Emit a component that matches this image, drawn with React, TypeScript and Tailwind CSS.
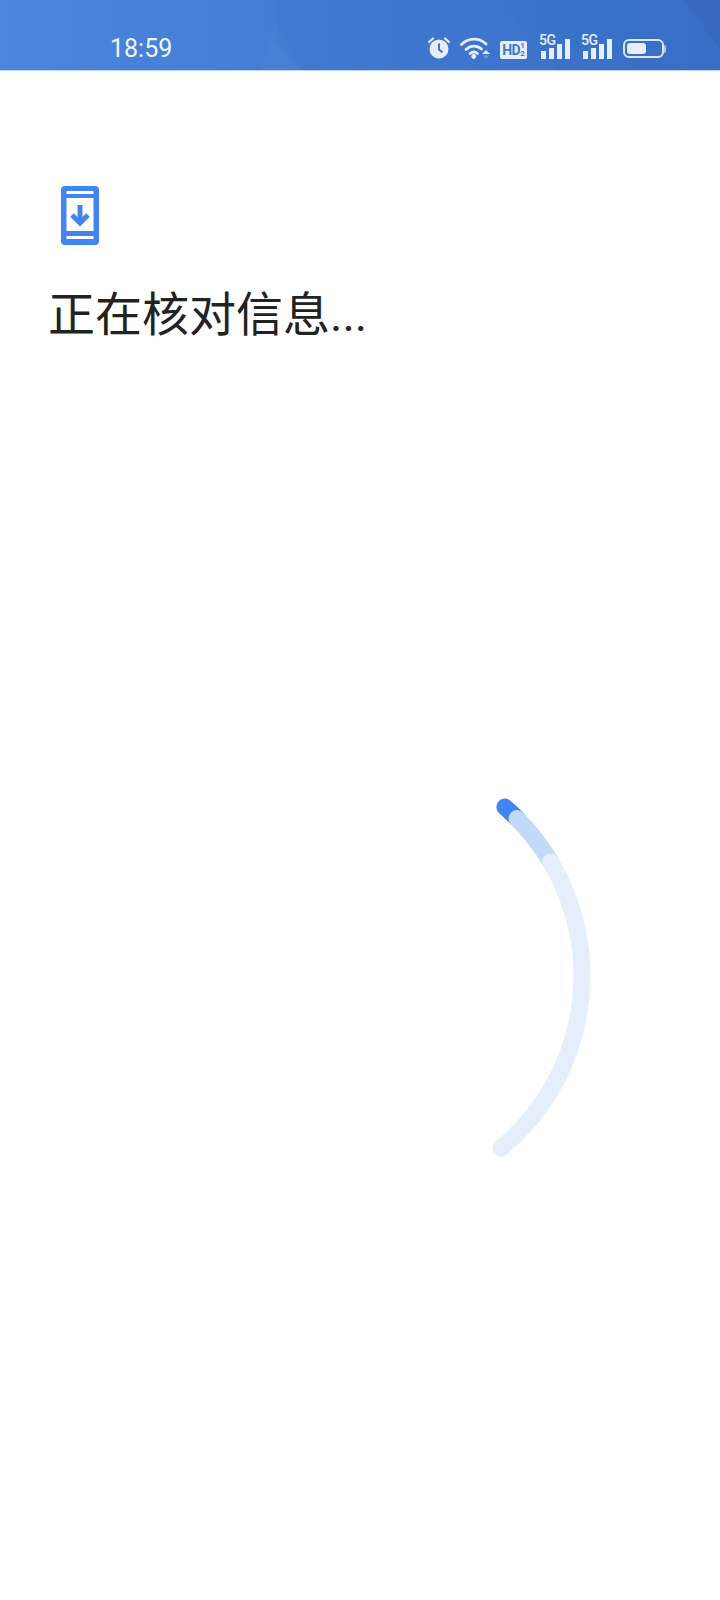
function AlarmIcon() {
  return (
    <svg width="24" height="23" viewBox="0 0 24 23" className="shrink-0">
      <circle cx="12" cy="13" r="9.5" fill="#e6eefb" />
      <path d="M12 7.5V13.5L15.5 16.5" stroke="#3f78cf" strokeWidth="2" fill="none" />
      <path d="M2 6L6 2.5M22 6L18 2.5" stroke="#e6eefb" strokeWidth="2.2" strokeLinecap="round" fill="none" />
    </svg>
  );
}

function WifiIcon() {
  return (
    <svg width="30" height="22" viewBox="0 0 30 22" className="shrink-0">
      <g stroke="#e6eefb" strokeWidth="2.8" fill="none" strokeLinecap="round">
        <path d="M1.5 7.5C8.5 0.5 19 0.5 26 7" />
        <path d="M6 12.5C10.5 8 17 8 21.5 12" />
        <path d="M10 16.5C12.5 14.5 15 14.5 17.5 16.5" />
      </g>
      <circle cx="13.7" cy="19.5" r="2.4" fill="#e6eefb" />
      <path d="M26 13L30 17H22Z" fill="#e6eefb" />
      <path d="M22.5 18.5H29.5L26 22Z" fill="#6f98da" />
    </svg>
  );
}

function SignalIcon() {
  return (
    <div className="relative w-[32px] h-[24px] shrink-0">
      <span className="absolute left-0 top-[-3px] text-[14px] leading-[16px] font-medium text-[#e6eefb] font-['Roboto',sans-serif] tracking-[-0.5px]">
        5G
      </span>
      <div className="absolute left-[2px] bottom-0 flex items-end gap-[3px]">
        <div className="w-[5px] h-[8px] bg-[#e6eefb]" />
        <div className="w-[5px] h-[11px] bg-[#e6eefb]" />
        <div className="w-[5px] h-[15px] bg-[#e6eefb]" />
        <div className="w-[5px] h-[20px] bg-[#e6eefb]" />
      </div>
    </div>
  );
}

function StatusBar() {
  return (
    <div className="relative h-[71px] overflow-hidden bg-gradient-to-r from-[#4a84dd] to-[#3a72ca] border-b border-[#bcd3f1]">
      {/* Faceted background */}
      <svg width="720" height="71" viewBox="0 0 720 71" className="absolute left-0 top-0">
        <path d="M0 0H110L122 71H0Z" fill="#ffffff" opacity="0.015" />
        <path d="M276 0H720V71H302L276 42Z" fill="#1f4f9e" opacity="0.05" />
        <path d="M260 71L276 20L303 71Z" fill="#ffffff" opacity="0.02" />
        <path d="M500 0L560 71H720V0Z" fill="#1f4f9e" opacity="0.03" />
        <path d="M684 0L720 50V0Z" fill="#1f4f9e" opacity="0.1" />
      </svg>
      <div className="relative flex items-end h-[59px] pl-[110px] pr-[54px]">
        <span className="text-[25px] leading-[25px] mb-[-2px] text-[#f2f6fd] font-['Roboto',sans-serif]">18:59</span>
        <div className="ml-auto flex items-end">
          <AlarmIcon />
          <div className="w-[9px]" />
          <WifiIcon />
          <div className="w-[10px]" />
          <div className="w-[27px] h-[18px] bg-[#e6eefb] rounded-[2px] flex items-center justify-center shrink-0">
            <span className="text-[14px] leading-none font-bold text-[#3f78cf] font-['Roboto',sans-serif] tracking-[-0.5px]">
              HD
            </span>
            <span className="flex flex-col text-[8px] leading-[8px] font-bold text-[#3f78cf] font-['Roboto',sans-serif]">
              <span>1</span>
              <span>2</span>
            </span>
          </div>
          <div className="w-[12px]" />
          <SignalIcon />
          <div className="w-[10px]" />
          <SignalIcon />
          <div className="w-[10px]" />
          <div className="flex items-center shrink-0 mb-[1px]">
            <div className="w-[41px] h-[19px] rounded-[6px] border-2 border-[#dbe6f8] p-[2px]">
              <div className="w-[19px] h-full rounded-[3px] bg-[#e6eefb]" />
            </div>
            <div className="w-[2px] h-[8px] rounded-r-[2px] bg-[#a9c3ec]" />
          </div>
        </div>
      </div>
    </div>
  );
}

function PhoneDownloadIcon() {
  return (
    <svg width="38" height="59" viewBox="0 0 38 59">
      <rect x="0" y="0" width="38" height="59" rx="4" fill="#4285f0" />
      <rect x="5.5" y="5" width="27" height="3" fill="#ffffff" />
      <rect x="5.5" y="12" width="27" height="33" fill="#ffffff" />
      <rect x="5.5" y="50" width="27" height="3" fill="#ffffff" />
      <path d="M19 19V37" stroke="#4285f0" strokeWidth="5" fill="none" />
      <path d="M11 29L19 37L27 29" stroke="#4285f0" strokeWidth="5" fill="none" />
    </svg>
  );
}

function Spinner() {
  return (
    <svg width="120" height="400" viewBox="0 0 120 400">
      <path d="M24.9 27.1A223.5 223.5 0 0 1 37.1 38.5" fill="none" stroke="#4285f0" strokeWidth="17" strokeLinecap="round" />
      <path d="M37.1 38.5A223.5 223.5 0 0 1 70.7 81.9" fill="none" stroke="#c3d9f8" strokeWidth="17" strokeLinecap="round" />
      <path d="M70.7 81.9A223.5 223.5 0 0 1 21 368.2" fill="none" stroke="#e4eefc" strokeWidth="17" strokeLinecap="round" />
    </svg>
  );
}

export default function App() {
  return (
    <div className="w-[720px] h-[1600px] bg-white overflow-hidden font-['Roboto','Noto_Sans_CJK_SC',sans-serif]">
      <StatusBar />
      <div className="pl-[61px] pt-[115px]">
        <PhoneDownloadIcon />
      </div>
      <h1 className="pl-[48px] mt-[40px] text-[47px] leading-[60px] font-normal text-[#222222]">正在核对信息...</h1>
      <div className="pl-[480px] mt-[435px]">
        <Spinner />
      </div>
    </div>
  );
}
